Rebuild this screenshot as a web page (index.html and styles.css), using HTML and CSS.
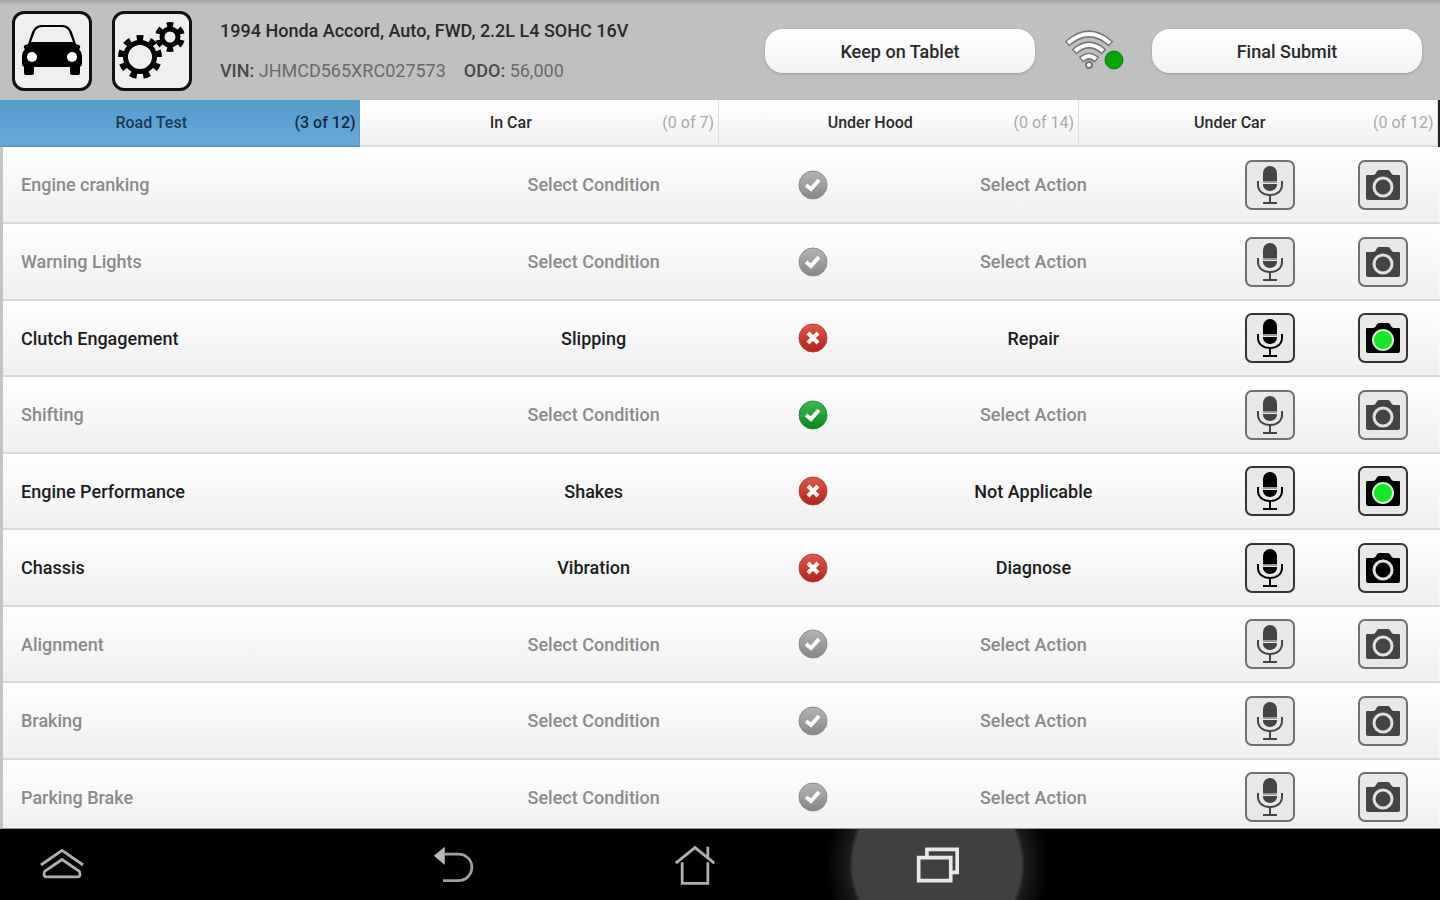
FILE: index.html
```html
<!DOCTYPE html>
<html lang="en">
<head>
  <meta charset="UTF-8">
  <meta name="viewport" content="width=device-width, initial-scale=1.0">
  <title>Vehicle Inspection</title>
  <link rel="stylesheet" href="styles.css">
</head>
<body>
  <!-- Shared icons -->
  <svg class="sprite" aria-hidden="true">
    <defs>
      <linearGradient id="grad-none" x1="0" y1="0" x2="0" y2="1">
        <stop offset="0" stop-color="#b4b4b4"/><stop offset="1" stop-color="#868686"/>
      </linearGradient>
      <linearGradient id="grad-ok" x1="0" y1="0" x2="0" y2="1">
        <stop offset="0" stop-color="#3dba4c"/><stop offset="1" stop-color="#058a1c"/>
      </linearGradient>
      <linearGradient id="grad-bad" x1="0" y1="0" x2="0" y2="1">
        <stop offset="0" stop-color="#e2574a"/><stop offset="1" stop-color="#b81f16"/>
      </linearGradient>
    </defs>
    <symbol id="mic" viewBox="0 0 48 48">
      <path d="M17 20V12a7 7 0 0 1 14 0v8z" fill="currentColor"/>
      <path d="M17 23h14v1a7 6 0 0 1-14 0z" fill="currentColor"/>
      <path d="M17 21h14" stroke="#999" stroke-width="2"/>
      <path d="M12 20v4c0 6 5 10 12 10s12-4 12-10v-4M24 34v7M17 42h14" fill="none" stroke="currentColor" stroke-width="2"/>
    </symbol>
    <symbol id="camera" viewBox="0 0 48 48">
      <path d="M8 14h6q2 0 3-2 1-3 3-3h9q2 0 3 3 1 2 3 2h5q1 0 1 1v22q0 2-2 2H9q-2 0-2-2V15q0-1 1-1z" fill="currentColor"/>
      <circle cx="24" cy="26" r="9" fill="currentColor" stroke="#e0e0e0" stroke-width="3"/>
    </symbol>
    <symbol id="camera-on" viewBox="0 0 48 48">
      <path d="M8 14h6q2 0 3-2 1-3 3-3h9q2 0 3 3 1 2 3 2h5q1 0 1 1v22q0 2-2 2H9q-2 0-2-2V15q0-1 1-1z" fill="currentColor"/>
      <circle cx="24" cy="26" r="10" fill="#12e824" stroke="#c8f5c8" stroke-width="2"/>
    </symbol>
    <symbol id="none" viewBox="0 0 32 32">
      <circle cx="16" cy="16" r="14" fill="url(#grad-none)" stroke="#8c8c8c" stroke-width="1"/>
      <path d="M9 16l5 4 8-9" fill="none" stroke="#fff" stroke-width="4"/>
    </symbol>
    <symbol id="ok" viewBox="0 0 32 32">
      <circle cx="16" cy="16" r="14" fill="url(#grad-ok)" stroke="#2c8a38" stroke-width="1"/>
      <path d="M9 16l5 4 8-9" fill="none" stroke="#fff" stroke-width="4"/>
    </symbol>
    <symbol id="bad" viewBox="0 0 32 32">
      <circle cx="16" cy="16" r="14" fill="url(#grad-bad)" stroke="#a8483c" stroke-width="1"/>
      <path d="M11 11l10 10M21 11L11 21" fill="none" stroke="#fff" stroke-width="4"/>
    </symbol>
  </svg>

  <header class="header">
    <button class="square" type="button" aria-label="Vehicle">
      <svg viewBox="0 0 80 80">
        <path d="M13 34l3-1 3-9q3-10 10-10h22q7 0 10 10l3 9 3 1q2 1 1 3l-1 1q3 3 3 8v7q0 2-2 3v6q0 2-2 2h-6q-2 0-2-2v-6H22v6q0 2-2 2h-6q-2 0-2-2v-6q-2-1-2-3v-7q0-5 3-8l-1-1q-1-2 1-3z" fill="#000"/>
        <path d="M19 31l3-8q2-7 8-7h20q6 0 8 7l3 8z" fill="#efefef"/>
        <circle cx="20" cy="46" r="5" fill="#fff"/>
        <circle cx="60" cy="46" r="5" fill="#fff"/>
      </svg>
    </button>
    <button class="square" type="button" aria-label="Settings">
      <svg viewBox="0 0 80 80">
        <g fill="none" stroke="#000">
          <circle cx="28" cy="46" r="14.5" stroke-width="5"/>
          <circle cx="28" cy="46" r="18.5" stroke-width="7" pathLength="90" stroke-dasharray="5 5" stroke-dashoffset="5"/>
          <circle cx="58" cy="26" r="8" stroke-width="5"/>
          <circle cx="58" cy="26" r="12" stroke-width="6" pathLength="60" stroke-dasharray="5 5" stroke-dashoffset="-2.5"/>
        </g>
      </svg>
    </button>
    <div class="vehicle">
      <h1 class="vehicle-name">1994 Honda Accord, Auto, FWD, 2.2L L4 SOHC 16V</h1>
      <p class="vehicle-info">
        <span><b>VIN:</b> JHMCD565XRC027573</span>
        <span><b>ODO:</b> 56,000</span>
      </p>
    </div>
    <button class="pill" type="button">Keep on Tablet</button>
    <svg class="wifi" viewBox="0 0 62 44" role="img" aria-label="Connected">
      <g fill="none" stroke="#777" stroke-width="7">
        <path d="M4 15q22-20 44 0M11 23q15-14 30 0M18 31q8-7 16 0"/>
      </g>
      <g fill="none" stroke="#fff" stroke-width="4">
        <path d="M5 14q21-18 42 0M12 22q14-12 28 0M19 30q7-6 14 0"/>
      </g>
      <circle cx="26" cy="36" r="3" fill="#fff" stroke="#777" stroke-width="2"/>
      <circle cx="51" cy="31" r="9" fill="#00a800" stroke="#0a7a0a" stroke-width="1"/>
    </svg>
    <button class="pill" type="button">Final Submit</button>
  </header>

  <nav class="tabs" aria-label="Sections">
    <button class="tab active" type="button"><span>Road Test</span><span class="count">(3 of 12)</span></button>
    <button class="tab" type="button"><span>In Car</span><span class="count">(0 of 7)</span></button>
    <button class="tab" type="button"><span>Under Hood</span><span class="count">(0 of 14)</span></button>
    <button class="tab" type="button"><span>Under Car</span><span class="count">(0 of 12)</span></button>
  </nav>

  <main class="list">
    <table class="checks">
      <colgroup>
        <col class="col-name"><col class="col-pick"><col class="col-status"><col class="col-pick"><col class="col-icon"><col class="col-icon">
      </colgroup>
      <tbody>
        <tr>
          <th scope="row">Engine cranking</th>
          <td><select aria-label="Engine cranking condition"><option>Select Condition</option></select></td>
          <td><button class="status" type="button" aria-label="Not checked"><svg><use href="#none"/></svg></button></td>
          <td><select aria-label="Engine cranking action"><option>Select Action</option></select></td>
          <td><button class="tool" type="button" aria-label="Record note"><svg><use href="#mic"/></svg></button></td>
          <td><button class="tool" type="button" aria-label="Take photo"><svg><use href="#camera"/></svg></button></td>
        </tr>
        <tr>
          <th scope="row">Warning Lights</th>
          <td><select aria-label="Warning Lights condition"><option>Select Condition</option></select></td>
          <td><button class="status" type="button" aria-label="Not checked"><svg><use href="#none"/></svg></button></td>
          <td><select aria-label="Warning Lights action"><option>Select Action</option></select></td>
          <td><button class="tool" type="button" aria-label="Record note"><svg><use href="#mic"/></svg></button></td>
          <td><button class="tool" type="button" aria-label="Take photo"><svg><use href="#camera"/></svg></button></td>
        </tr>
        <tr class="filled">
          <th scope="row">Clutch Engagement</th>
          <td><select aria-label="Clutch Engagement condition"><option>Slipping</option></select></td>
          <td><button class="status" type="button" aria-label="Failed"><svg><use href="#bad"/></svg></button></td>
          <td><select aria-label="Clutch Engagement action"><option>Repair</option></select></td>
          <td><button class="tool" type="button" aria-label="Record note"><svg><use href="#mic"/></svg></button></td>
          <td><button class="tool" type="button" aria-label="View photo"><svg><use href="#camera-on"/></svg></button></td>
        </tr>
        <tr>
          <th scope="row">Shifting</th>
          <td><select aria-label="Shifting condition"><option>Select Condition</option></select></td>
          <td><button class="status" type="button" aria-label="Passed"><svg><use href="#ok"/></svg></button></td>
          <td><select aria-label="Shifting action"><option>Select Action</option></select></td>
          <td><button class="tool" type="button" aria-label="Record note"><svg><use href="#mic"/></svg></button></td>
          <td><button class="tool" type="button" aria-label="Take photo"><svg><use href="#camera"/></svg></button></td>
        </tr>
        <tr class="filled">
          <th scope="row">Engine Performance</th>
          <td><select aria-label="Engine Performance condition"><option>Shakes</option></select></td>
          <td><button class="status" type="button" aria-label="Failed"><svg><use href="#bad"/></svg></button></td>
          <td><select aria-label="Engine Performance action"><option>Not Applicable</option></select></td>
          <td><button class="tool" type="button" aria-label="Record note"><svg><use href="#mic"/></svg></button></td>
          <td><button class="tool" type="button" aria-label="View photo"><svg><use href="#camera-on"/></svg></button></td>
        </tr>
        <tr class="filled">
          <th scope="row">Chassis</th>
          <td><select aria-label="Chassis condition"><option>Vibration</option></select></td>
          <td><button class="status" type="button" aria-label="Failed"><svg><use href="#bad"/></svg></button></td>
          <td><select aria-label="Chassis action"><option>Diagnose</option></select></td>
          <td><button class="tool" type="button" aria-label="Record note"><svg><use href="#mic"/></svg></button></td>
          <td><button class="tool" type="button" aria-label="Take photo"><svg><use href="#camera"/></svg></button></td>
        </tr>
        <tr>
          <th scope="row">Alignment</th>
          <td><select aria-label="Alignment condition"><option>Select Condition</option></select></td>
          <td><button class="status" type="button" aria-label="Not checked"><svg><use href="#none"/></svg></button></td>
          <td><select aria-label="Alignment action"><option>Select Action</option></select></td>
          <td><button class="tool" type="button" aria-label="Record note"><svg><use href="#mic"/></svg></button></td>
          <td><button class="tool" type="button" aria-label="Take photo"><svg><use href="#camera"/></svg></button></td>
        </tr>
        <tr>
          <th scope="row">Braking</th>
          <td><select aria-label="Braking condition"><option>Select Condition</option></select></td>
          <td><button class="status" type="button" aria-label="Not checked"><svg><use href="#none"/></svg></button></td>
          <td><select aria-label="Braking action"><option>Select Action</option></select></td>
          <td><button class="tool" type="button" aria-label="Record note"><svg><use href="#mic"/></svg></button></td>
          <td><button class="tool" type="button" aria-label="Take photo"><svg><use href="#camera"/></svg></button></td>
        </tr>
        <tr>
          <th scope="row">Parking Brake</th>
          <td><select aria-label="Parking Brake condition"><option>Select Condition</option></select></td>
          <td><button class="status" type="button" aria-label="Not checked"><svg><use href="#none"/></svg></button></td>
          <td><select aria-label="Parking Brake action"><option>Select Action</option></select></td>
          <td><button class="tool" type="button" aria-label="Record note"><svg><use href="#mic"/></svg></button></td>
          <td><button class="tool" type="button" aria-label="Take photo"><svg><use href="#camera"/></svg></button></td>
        </tr>
      </tbody>
    </table>
  </main>

  <!-- System bar -->
  <footer class="system-bar">
    <button class="nav-btn nav-first" type="button" aria-label="Open drawer">
      <svg viewBox="0 0 48 48">
        <path d="M1 24L24 8l23 16M24 18l19 13q2 6-2 6H7q-4 0-2-6z" fill="none" stroke="#b0b0b0" stroke-width="3" stroke-linejoin="round"/>
      </svg>
    </button>
    <button class="nav-btn" type="button" aria-label="Back">
      <svg viewBox="0 0 48 48">
        <path d="M14 12h15a14 14 0 0 1 0 29H12" fill="none" stroke="#a0a0a0" stroke-width="3"/>
        <path d="M2 14L14 4v20z" fill="#b8b8b8"/>
      </svg>
    </button>
    <button class="nav-btn" type="button" aria-label="Home">
      <svg viewBox="0 0 48 48">
        <path d="M3 22L24 5l21 17M10 21v23h28V21M38 15V4" fill="none" stroke="#b0b0b0" stroke-width="3"/>
      </svg>
    </button>
    <button class="nav-btn nav-pressed" type="button" aria-label="Recent apps">
      <svg viewBox="0 0 48 48">
        <path d="M4 16h35v25H4zM13 15V7h33v25h-6" fill="none" stroke="#e8e8e8" stroke-width="4"/>
      </svg>
    </button>
  </footer>
</body>
</html>
```

FILE: styles.css
```css
* {
  box-sizing: border-box;
}

body {
  display: flex;
  flex-direction: column;
  height: 100vh;
  margin: 0;
  overflow: hidden;
  background: #fff;
  color: #2a2a2a;
  font-family: Roboto, "Liberation Sans", sans-serif;
  font-size: 18px;
  font-weight: 500;
}

button, select {
  margin: 0;
  padding: 0;
  border: none;
  background: none;
  color: inherit;
  font: inherit;
  cursor: pointer;
}

svg {
  display: block;
}

.sprite {
  position: absolute;
  width: 0;
  height: 0;
}

/* Header */
.header {
  display: flex;
  align-items: center;
  flex: none;
  height: 100px;
  padding: 2px 18px 0 12px;
  background: linear-gradient(#a0a0a0, #c0c0c0 5px);
}

.square {
  width: 80px;
  height: 80px;
  margin-right: 20px;
  border: 3px solid #111;
  border-radius: 12px;
  background: #efefef;
}

.square svg {
  width: 80px;
  height: 80px;
  margin: -3px;
}

.vehicle {
  flex: 1;
  padding-left: 8px;
  white-space: nowrap;
}

.vehicle-name, .vehicle-info {
  margin: 0;
  font-size: 18px;
  line-height: 40px;
}

.vehicle-name {
  font-weight: 500;
}

.vehicle-info {
  display: flex;
  gap: 18px;
  color: #6a6a6a;
  font-weight: 400;
}

.vehicle-info b {
  color: #4a4a4a;
  font-weight: 500;
}

.pill {
  width: 270px;
  height: 44px;
  border-radius: 18px;
  background: linear-gradient(#fff, #f3f3f3);
  box-shadow: 0 1px 3px #999;
}

.wifi {
  width: 62px;
  height: 44px;
  margin: 0 27px 0 28px;
}

/* Tabs */
.tabs {
  display: grid;
  grid-template-columns: repeat(4, 1fr);
  flex: none;
  height: 47px;
  border-right: 2px solid #222;
}

.tab {
  display: grid;
  grid-template-columns: 1fr 60px;
  align-items: center;
  padding: 0 4px 0 8px;
  border-right: 1px solid #ddd;
  border-bottom: 2px solid #ddd;
  background: linear-gradient(#fff, #f1f1f1);
  font-size: 16px;
}

.count {
  color: #aaa;
  font-weight: 400;
  text-align: right;
  white-space: nowrap;
}

.tab.active {
  border-color: #5a9cca;
  background: linear-gradient(#559bcd, #68aad8);
  color: #1c3a52;
}

.active .count {
  color: #12283c;
  font-weight: 500;
}

/* Inspection rows */
.list {
  flex: 1;
  min-height: 0;
  overflow: hidden;
  border-left: 3px solid #c4c4c4;
  border-bottom: 1px solid #999;
}

.checks {
  width: 100%;
  border-collapse: collapse;
  table-layout: fixed;
}

.col-pick {
  width: 25%;
}

.col-status {
  width: 5.6%;
}

.col-icon {
  width: 7.9%;
}

.checks tr {
  height: 76px;
  background: linear-gradient(#fff, #efefef);
  color: #8a8a8a;
}

.checks tr:nth-child(even) {
  height: 77px;
}

.checks tr.filled {
  color: #1c1c1c;
}

.checks th, .checks td {
  padding: 0;
  border-bottom: 2px solid #d8d8d8;
  text-align: center;
}

.checks th {
  padding-left: 18px;
  font-weight: 500;
  text-align: left;
}

.checks select {
  width: 100%;
  appearance: none;
  text-align: center;
  text-align-last: center;
}

.status, .status svg {
  width: 32px;
  height: 32px;
}

.status, .tool {
  display: block;
  margin: 0 auto;
}

.tool {
  width: 50px;
  height: 50px;
  border: 2px solid #707070;
  border-radius: 7px;
  background: #e8e8e8;
  color: #444;
}

.tool svg {
  width: 48px;
  height: 48px;
  margin: -1px;
}

.filled .tool {
  border-color: #333;
  color: #000;
}

/* System bar */
.system-bar {
  display: grid;
  grid-template-columns: 23.1% 16.8% 16.8% 16.8%;
  flex: none;
  height: 71px;
  background: #000;
}

.nav-btn {
  display: flex;
  align-items: center;
  justify-content: center;
}

.nav-btn svg {
  width: 44px;
  height: 44px;
}

.nav-first {
  width: 124px;
}

.nav-pressed {
  background: radial-gradient(circle, #404040 84px, #1c1c1c 88px, #000 112px);
}
```
